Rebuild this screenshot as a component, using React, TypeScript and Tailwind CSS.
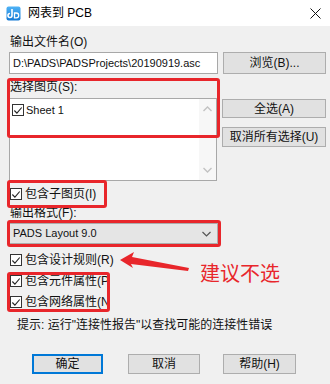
import React from "react";

const font = { fontFamily: '"Liberation Sans", "Noto Sans CJK SC", sans-serif' };

function Check({ size = 13 }: { size?: number }) {
  return (
    <span
      className="flex items-center justify-center border border-[#333333] bg-white shrink-0"
      style={{ width: size, height: size }}
    >
      <svg width="11" height="11" viewBox="0 0 11 11" fill="none">
        <path d="M1.5 5.5 L4.3 8.4 L9.6 2.2" stroke="#222" strokeWidth="1.2" />
      </svg>
    </span>
  );
}

function CheckRow({ label, className = "" }: { label: string; className?: string }) {
  return (
    <div className={`flex items-center h-[16px] pl-[1px] ${className}`}>
      <Check size={12} />
      <span className="ml-[3px] text-[12px] leading-[16px] text-[#111] whitespace-nowrap">{label}</span>
    </div>
  );
}

function Btn({ children, className = "", primary }: { children: React.ReactNode; className?: string; primary?: boolean }) {
  return (
    <div
      className={`flex items-center justify-center bg-[#e1e1e1] text-[12px] leading-none text-[#111] whitespace-nowrap ${
        primary ? "border-2 border-[#0078d7]" : "border border-[#adadad]"
      } ${className}`}
    >
      {children}
    </div>
  );
}

export default function App() {
  return (
    <div className="relative w-[330px] h-[384px] overflow-hidden bg-[#f0f0f0]" style={font}>
      {/* Title bar */}
      <div className="flex items-center h-[26px] bg-white">
        <svg className="ml-[6px]" width="15" height="15" viewBox="0 0 15 15">
          <defs>
            <linearGradient id="g" x1="0" y1="0" x2="0" y2="1">
              <stop offset="0" stopColor="#4fb3f6" />
              <stop offset="1" stopColor="#1479d4" />
            </linearGradient>
          </defs>
          <rect x="0.5" y="0.5" width="14" height="14" rx="2" fill="url(#g)" />
          <path d="M6 3 V9.5 a2 2 0 1 1 -2 -2" stroke="#fff" strokeWidth="1.6" fill="none" />
          <path d="M8.5 7 h1.8 a2.4 2.4 0 0 1 0 4.8 h-1.8 z" stroke="#fff" strokeWidth="1.3" fill="none" />
        </svg>
        <span className="ml-[7px] text-[12px] leading-none text-black">网表到 PCB</span>
        <svg className="ml-auto mr-[9px]" width="11" height="11" viewBox="0 0 11 11">
          <path d="M0.5 0.5 L10.5 10.5 M10.5 0.5 L0.5 10.5" stroke="#111" strokeWidth="1" />
        </svg>
      </div>

      {/* Body */}
      <div className="pl-[9px] pr-[4px]">
        <div className="mt-[8px] h-[16px] pl-[1px] text-[12px] leading-[16px] text-[#111]">输出文件名(O)</div>

        <div className="mt-[2px] flex h-[22px]">
          <div className="w-[209px] flex items-center border border-[#a8a8a8] bg-white pl-[3px] text-[11px] text-[#111] whitespace-nowrap overflow-hidden">
            D:\PADS\PADSProjects\20190919.asc
          </div>
          <Btn className="ml-[5px] w-[103px]">浏览(B)...</Btn>
        </div>

        <div className="mt-[5px] h-[16px] pl-[1px] text-[12px] leading-[16px] text-[#111]">选择图页(S):</div>

        <div className="mt-[3px] flex">
          <div className="w-[209px] h-[83px] flex border border-[#a8a8a8] bg-white">
            <div className="flex-1 pt-[3px] pl-[2px]">
              <div className="flex items-center h-[16px]">
                <Check size={12} />
                <span className="ml-[2px] text-[11px] leading-[16px] text-[#111]">Sheet 1</span>
              </div>
            </div>
            <div className="w-[17px] flex flex-col items-center justify-between py-[7px] bg-[#f7f7f7]">
              <svg width="9" height="6" viewBox="0 0 9 6">
                <path d="M0.5 5 L4.5 1 L8.5 5" stroke="#c2c2c2" strokeWidth="1.3" fill="none" />
              </svg>
              <svg width="9" height="6" viewBox="0 0 9 6">
                <path d="M0.5 1 L4.5 5 L8.5 1" stroke="#c2c2c2" strokeWidth="1.3" fill="none" />
              </svg>
            </div>
          </div>
          <div className="ml-[5px] flex flex-col">
            <Btn className="mt-[1px] w-[104px] h-[19px]">全选(A)</Btn>
            <Btn className="mt-[9px] w-[104px] h-[20px]">取消所有选择(U)</Btn>
          </div>
        </div>

        <CheckRow label="包含子图页(I)" className="mt-[5px]" />

        <div className="mt-[3px] h-[16px] pl-[1px] text-[12px] leading-[16px] text-[#111]">输出格式(F):</div>

        <div className="mt-[2px] w-[209px] h-[21px] flex items-center justify-between border border-[#acacac] bg-[#e5e5e5] pl-[3px] pr-[6px] text-[11px] text-[#111]">
          <span>PADS Layout 9.0</span>
          <svg width="9" height="6" viewBox="0 0 9 6">
            <path d="M0.5 1 L4.5 5 L8.5 1" stroke="#555" strokeWidth="1.2" fill="none" />
          </svg>
        </div>

        <CheckRow label="包含设计规则(R)" className="mt-[8px]" />
        <CheckRow label="包含元件属性(P" className="mt-[5px]" />
        <CheckRow label="包含网络属性(N" className="mt-[5px]" />

        <div className="mt-[7px] ml-[8px] h-[16px] text-[12px] leading-[16px] text-[#111] whitespace-nowrap">
          提示: 运行"连接性报告"以查找可能的连接性错误
        </div>

        <div className="mt-[21px] flex h-[20px] pl-[23px]">
          <Btn primary className="w-[71px]">确定</Btn>
          <Btn className="ml-[25px] w-[72px]">取消</Btn>
          <Btn className="ml-[23px] w-[73px]">帮助(H)</Btn>
        </div>
      </div>

      {/* Red annotation boxes */}
      <div className="absolute left-[7px] top-[78px] w-[213px] h-[60px] border-[3px] border-[#e8262b] rounded-[3px]" />
      <div className="absolute left-[7px] top-[180px] w-[100px] h-[28px] border-[3px] border-[#e8262b] rounded-[3px]" />
      <div className="absolute left-[7px] top-[220px] w-[214px] h-[27px] border-[3px] border-[#e8262b] rounded-[3px]" />
      <div className="absolute left-[7px] top-[272px] w-[103px] h-[40px] border-[3px] border-[#e8262b] rounded-[3px]" />

      {/* Arrow */}
      <svg className="absolute left-0 top-0" width="330" height="384" viewBox="0 0 330 384">
        <polygon points="120,260 134,252 132,257 189,268 188,271 131,264 133,268" fill="#e8262b" />
      </svg>
      <div className="absolute left-[200px] top-[261px] text-[20px] leading-[26px] text-[#e8262b] whitespace-nowrap">
        建议不选
      </div>
    </div>
  );
}
